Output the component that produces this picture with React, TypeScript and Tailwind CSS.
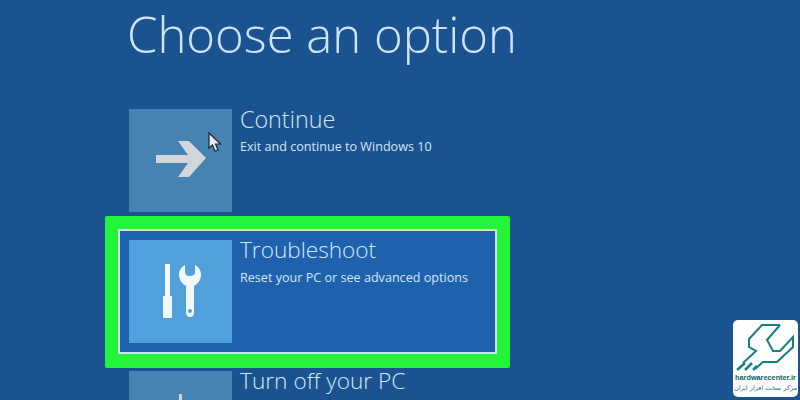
import React from 'react';

const font = "font-['Open_Sans',_'Noto_Sans',_sans-serif]";

const ArrowIcon = () => (
  <svg width="50" height="36" viewBox="0 0 50 36">
    <path d="M0 14H32L22 0H33L50 17L33 36H22L32 22H0Z" fill="#d3d6d8" />
  </svg>
);

const ToolsIcon = () => (
  <svg width="38" height="54" viewBox="0 0 38 54" fill="#f3f8fc">
    <path d="M2 0H7V32H9V53Q9 54 8 54H1Q0 54 0 53V32H2Z" />
    <path
      fillRule="evenodd"
      d="M22 1V8Q22 12 27 12Q32 12 32 8V1Q38 4 38 11Q38 18 31 22V48Q31 53 27 53Q23 53 23 48V22Q16 18 16 11Q16 4 22 1ZM27 45A2 2 0 1 0 27 49A2 2 0 1 0 27 45Z"
    />
  </svg>
);

const Cursor = () => (
  <svg width="14" height="20" viewBox="0 0 14 20" className="absolute left-[208px] top-[132px]">
    <path d="M1 1V16L4.500 13L7 19L10 18L7.500 12H12.500Z" fill="#e8ecef" stroke="#1a2738" strokeWidth="1.200" />
  </svg>
);

const Option = ({
  title,
  text,
  tile,
  size,
  children,
}: {
  title: string;
  text?: string;
  tile: string;
  size: string;
  children: React.ReactNode;
}) => (
  <div className="flex h-[103px] w-full">
    <div className={`flex h-[103px] w-[103px] shrink-0 items-center justify-center ${tile}`}>{children}</div>
    <div className="ml-[8px] flex flex-col">
      <div className={`mt-[-6px] leading-[32px] font-light whitespace-nowrap text-[#d3e9fb] ${size}`}>{title}</div>
      {text && <div className="mt-[3px] text-[12.600px] leading-[18px] whitespace-nowrap text-[#d3e6f6]">{text}</div>}
    </div>
  </div>
);

const Logo = () => (
  <div className="absolute left-[733px] top-[320px] flex h-[77px] w-[65px] flex-col items-center overflow-hidden rounded-[5px] bg-white pt-[3px]">
    <svg width="61" height="48" viewBox="0 0 61 48" fill="none" stroke="#15807f" strokeWidth="2">
      <path d="M45 2H27L14 16V24L21 28L8 40" />
      <path d="M45 2L32 17L38 28H45L58 14V24L42 39H28L20 46" />
      <path d="M2 47L10 40M10 47L17 40M18 47L22 43" strokeWidth="2.500" />
    </svg>
    <div className="mt-[1px] font-['Liberation_Sans',_sans-serif] text-[7.300px] leading-[11px] font-bold whitespace-nowrap text-[#0d5f63]">
      hardwarecenter.ir
    </div>
    <div
      dir="rtl"
      className="font-['DejaVu_Sans',_sans-serif] text-[6.500px] leading-[11px] whitespace-nowrap text-[#2f7a7c]"
    >
      مرکز سخت افزار ایران
    </div>
  </div>
);

export default function App() {
  return (
    <div className={`relative h-[400px] w-[800px] overflow-hidden bg-[#1b5290] ${font}`}>
      <h1 className="ml-[127px] text-[49px] leading-[68px] font-light whitespace-nowrap text-[#cde5fa]">
        Choose an option
      </h1>

      <div className="ml-[129px] mt-[41px] w-[381px]">
        <Option title="Continue" text="Exit and continue to Windows 10" tile="bg-[#4583b3]" size="text-[23.300px]">
          <div className="mb-[3px]">
            <ArrowIcon />
          </div>
        </Option>
      </div>

      {/* Selected row */}
      <div className="ml-[105px] mt-[4px] h-[152px] w-[405px] rounded-[2px] bg-[#22f53a] p-[13px]">
        <div className="h-[125px] w-[379px] border-2 border-[#cfe6ee] bg-[#1e62ae] pl-[9px] pt-[9px]">
          <Option title="Troubleshoot" text="Reset your PC or see advanced options" tile="bg-[#50a0dc]" size="text-[22.600px]">
            <div className="ml-[3px] mt-[-1px]">
              <ToolsIcon />
            </div>
          </Option>
        </div>
      </div>

      <div className="ml-[129px] mt-[3px] w-[381px]">
        <Option title="Turn off your PC" tile="bg-[#4583b3]" size="text-[22.700px]">
          <div className="mb-[28px] h-[30px] w-[3px] bg-[#d3d6d8]" />
        </Option>
      </div>

      <Cursor />
      <Logo />
    </div>
  );
}
